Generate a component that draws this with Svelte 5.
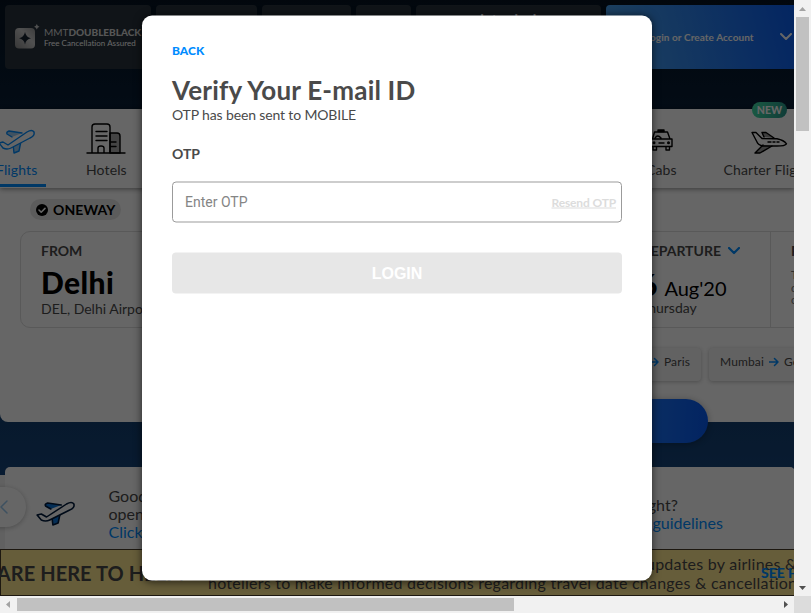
<script>
  let otp = $state('');
</script>

{#snippet plane()}
  <path d="M15 9 10 6q-1-2 2-3l13 2M24 13l-2 10-5 2-1-9" class="wing" />
  <path d="M2 15 6 14l5 3L30 4q5-3 7 0 1 4-4 6L14 20q-4 2-8 0Z" class="hull" />
{/snippet}

{#snippet arrow()}
  <svg class="arrow" width="10" height="10" viewBox="0 0 10 10"><path d="M0 5h9M5.5 1.5 9 5 5.500 8.500" /></svg>
{/snippet}

<div class="window">
  <div class="upper">
    <div class="page">
      <header>
        <div class="tile brand">
          <svg width="26" height="26" viewBox="0 0 26 26">
            <defs><linearGradient id="silver" x1="0" y1="1" x2="1" y2="0"><stop stop-color="#8b8b8b" /><stop offset=".6" stop-color="#c9c9c9" /><stop offset="1" stop-color="#999" /></linearGradient></defs>
            <rect x="0" y="4" width="20" height="20.500" rx="4" fill="url(#silver)" />
            <path d="M10 8q1 5.300 6 6.300-5 1-6 6.200-1-5.200-6-6.200 5-1 6-6.300Z" fill="#172331" />
            <path d="M21.800 0q.5 2.300 2.700 2.800-2.200.5-2.700 2.700-.5-2.200-2.700-2.700 2.200-.5 2.700-2.800Z" fill="#c9c9c9" />
          </svg>
          <div class="words"><p>MMT<b>DOUBLEBLACK</b></p><small>Free Cancellation Assured</small></div>
        </div>
        <div class="tile w101"></div>
        <div class="tile w89"></div>
        <div class="tile w55"></div>
        <div class="tile biz">Introducing</div>
        <div class="account">
          <span>Login or Create Account</span>
          <svg width="12" height="8" viewBox="0 0 12 8"><path d="m1 1 5 5 5-5" /></svg>
        </div>
      </header>

      <nav>
        <div class="tab flights">
          <svg width="40" height="26" viewBox="0 0 40 26">{@render plane()}</svg>
          <span>Flights</span><i></i>
        </div>
        <div class="tab hotels">
          <svg width="40" height="34" viewBox="0 0 40 34">
            <path d="M24 12h7q3 0 3 3v17H24Z" fill="#aaa" />
            <path d="M1 32h38M6 32V6q0-3 3-3h12q3 0 3 3v26M12 32v-5q0-2 3-2t3 2v5M10 10.500h11M10 15h11M10 19.500h11M25 21h5M25 25.500h5" />
          </svg>
          <span>Hotels</span>
        </div>
        <div class="tab cabs">
          <svg width="25" height="22" viewBox="0 0 25 22">
            <path d="M9 1h6v1.500H9Z" fill="#000" />
            <path d="m3.500 10 2-7h13l2.500 7M1.500 10h21.500v7.500H1.500ZM4 18v3h3.500v-3M17 18v3h3.500v-3M10 14h5M6 9q2.500-4 6 0" /><circle cx="5" cy="13.700" r=".8" /><circle cx="19.500" cy="13.700" r=".8" />
          </svg>
          <span>Cabs</span>
        </div>
        <div class="tab charter">
          <em>NEW</em>
          <svg width="37" height="24" viewBox="0 0 37 24">
            <path d="m13 6-2-4.500h4L23 7M12 14l-8 8h5l12-7" fill="#999" />
            <path d="M1 1.500h4l6 6 15 .3q7 1.500 9.500 5Q34 15 26 15H12q-5-1-6-4Z" /><path d="M17 11h3M22 11h2M26 11h2" />
          </svg>
          <span>Charter Flights</span>
        </div>
      </nav>

      <main>
        <div class="way">
          <svg width="12" height="12" viewBox="0 0 12 12"><circle cx="6" cy="6" r="6" /><path d="m3 6 2.200 2.200L9 4.400" /></svg>
          <b>ONEWAY</b>
        </div>
        <div class="search">
          <div class="from"><h4>FROM</h4><h2>Delhi</h2><p>DEL, Delhi Airport India</p></div>
          <div class="depart">
            <h4>DEPARTURE <svg width="12" height="8" viewBox="0 0 12 8"><path d="m1 1 5 5 5-5" /></svg></h4>
            <div class="date"><b>6</b> Aug'20</div>
            <p>Thursday</p>
          </div>
          <div class="return"><h4>RETURN</h4><p>Tap to add a return date</p><p>discounts</p><p>on return</p></div>
        </div>
        <div class="routes">
          <div class="route first">Delhi {@render arrow()} Paris</div>
          <div class="route">Mumbai {@render arrow()} Goa</div>
        </div>
        <div class="go"></div>
      </main>

      <section class="offer">
        <svg width="41" height="26" viewBox="0 0 39 26" preserveAspectRatio="none">{@render plane()}</svg>
        <div class="left"><p>Good news,</p><p>open again</p><p class="link">Click here</p></div>
        <div class="right"><p>flight?</p><p class="link">guidelines</p></div>
        <div class="prev"><svg width="8" height="14" viewBox="0 0 8 14"><path d="M7 1 1 7l6 6" /></svg></div>
      </section>

      <aside>
        <strong>WE ARE HERE TO HELP!</strong>
        <div class="notice"><p class="top">updates by airlines &amp;</p><p>hoteliers to make informed decisions regarding travel date changes &amp; cancellations</p></div>
        <b class="see">SEE HOW</b>
      </aside>

      <div class="shade">
        <form class="modal">
          <div class="back">BACK</div>
          <h1>Verify Your E-mail ID</h1>
          <p class="sent">OTP has been sent to MOBILE</p>
          <label for="otp">OTP</label>
          <div class="field"><input id="otp" placeholder="Enter OTP" bind:value={otp} /><span>Resend OTP</span></div>
          <button type="button">LOGIN</button>
        </form>
      </div>
    </div>
    <div class="vbar">
      <svg width="17" height="17"><path d="m5 11 3.500-4 3.500 4Z" fill="#a3a3a3" /></svg>
      <i></i>
      <svg class="end" width="17" height="17"><path d="m5 7 3.500 4L12 7Z" fill="#505050" /></svg>
    </div>
  </div>
  <div class="hbar">
    <svg width="17" height="17"><path d="m10 5-4 3.500 4 3.500Z" fill="#a3a3a3" /></svg>
    <i></i>
    <svg class="end" width="17" height="17"><path d="m7 5 4 3.500L7 12Z" fill="#505050" /></svg>
    <div class="corner"></div>
  </div>
</div>

<style>
  :global(body) { overflow: hidden; }
  .window, .window :global(*) { box-sizing: border-box; }
  .window { width: 811px; height: 613px; font-family: Lato, sans-serif; color: #4a4a4a; overflow: hidden; }
  h1, h2, h4, p { margin: 0; font-weight: 400; }
  svg { fill: none; flex: none; display: block; stroke-linecap: round; stroke-linejoin: round; }
  .upper { display: flex; height: 596px; }
  .page { position: relative; width: 794px; height: 596px; overflow: hidden; white-space: nowrap; background: linear-gradient(#051322, #15457b) 0 0 / 100% 475px no-repeat #f2f2f2; }

  header { height: 109px; padding-top: 5px; padding-left: 5px; display: flex; gap: 5px; }
  .tile { height: 64px; border-radius: 4px; background: #29333d; flex: none; }
  .brand { width: 146px; display: flex; padding: 19px 0 0 10px; gap: 3px; color: #d8d8d8; }
  .words { padding-top: 2px; }
  .words p { font-size: 10px; line-height: 12px; letter-spacing: -.02px; }
  .words b { font-weight: 900; }
  .words small { display: block; font-size: 8px; line-height: 10px; letter-spacing: .04px; color: #fff; }
  .w101 { width: 101px; }
  .w89 { width: 89px; }
  .w55 { width: 55px; }
  .biz { width: 185px; padding: 5px 0 0 64px; font-size: 14px; line-height: 17px; color: #fff; font-weight: 700; }
  .account { width: 200px; flex: none; height: 64px; border-radius: 4px 0 0 4px; background: linear-gradient(75deg, #4da6f0, #065af3); display: flex; align-items: center; padding-left: 39px; gap: 26px; color: #fff; font-size: 10px; font-weight: 700; letter-spacing: .08px; }
  .account svg { stroke: #fff; stroke-width: 2; }
  .account span { width: 109px; }

  nav { position: relative; z-index: 1; height: 79px; background: #fff; box-shadow: 0 1px 5px rgba(0, 0, 0, .45); display: flex; font-size: 14px; }
  .tab { display: flex; flex-direction: column; flex: none; position: relative; letter-spacing: .12px; }
  .tab span { line-height: 18px; margin-top: auto; margin-bottom: 9px; }
  .tab svg { stroke: #000; stroke-width: 1.4; }
  .flights { width: 86px; margin-left: -4px; color: #008cff; }
  .flights svg { stroke: #008cff; margin: 19px 0 0 1px; }
  .wing { fill: #a0cdf3; }
  .hull { fill: #fff; }
  .flights i { position: absolute; left: 0; bottom: 1px; width: 50px; height: 3px; background: #008cff; }
  .hotels { width: 564px; padding-left: 4px; }
  .hotels svg { margin: 12px 0 0; }
  .cabs { width: 77.500px; }
  .cabs svg { margin: 20px 0 0 3px; }
  .charter svg { margin: 22px 0 0 27px; }
  .charter em { position: absolute; left: 28.500px; top: -7px; width: 35px; height: 16px; border-radius: 8px; background: linear-gradient(100deg, #43e1a8, #28958a); color: #fff; font: 900 10.500px/16px Lato, sans-serif; text-align: center; }

  main { position: relative; height: 234px; background: #fff; border-radius: 0 0 0 8px; padding: 11px 0 0 20px; }
  .way { margin-left: 10px; width: 91px; height: 21px; border-radius: 11px; background: #e7e7e7; display: flex; align-items: center; padding-left: 6px; gap: 5px; color: #000; font-size: 14px; letter-spacing: .1px; }
  .way circle { fill: #000; }
  .way path { stroke: #fff; stroke-width: 1.600; }
  .search { margin-top: 11px; width: 900px; height: 97px; border: 1px solid #dedede; border-radius: 10px; display: flex; }
  .search h4 { font-size: 14px; line-height: 18px; font-weight: 700; padding-top: 10px; display: flex; gap: 7px; align-items: center; }
  .search p { font-size: 14px; line-height: 17px; }
  .from { width: 601px; padding-left: 20px; }
  .from h2 { font-size: 30px; line-height: 37px; font-weight: 900; color: #000; margin: 4px 0 -1px; letter-spacing: .4px; }
  .depart { width: 148px; padding-left: 18px; }
  .depart svg { stroke: #008cff; stroke-width: 2.200; }
  .date { display: flex; align-items: baseline; gap: 7px; font-size: 20px; line-height: 37px; margin: 6px 0 -8px; color: #000; }
  .date b { font-size: 30px; font-weight: 900; }
  .return { border-left: 1px solid #dedede; padding-left: 20px; }
  .return h4 { margin-bottom: 9px; }
  .return p { font-size: 11px; line-height: 12.500px; color: #777; }
  .routes { display: flex; gap: 8px; margin: 20px 0 0 540px; }
  .route { height: 33px; flex: none; width: 141px; border-radius: 4px; background: #f5f5f5; box-shadow: 0 1px 4px rgba(0, 0, 0, .25); display: flex; align-items: flex-start; gap: 5px; padding-left: 11px; font-size: 12px; line-height: 28px; letter-spacing: .12px; }
  .first { justify-content: flex-end; padding-right: 11px; }
  .arrow { stroke: #008cff; stroke-width: 1.500; margin-top: 9px; }
  .go { position: absolute; left: 492px; top: 211px; width: 216px; height: 44px; border-radius: 22px; background: linear-gradient(93deg, #53b2fe, #065af3); box-shadow: 0 1px 7px rgba(0, 0, 0, .3); }

  .offer { position: relative; margin: 45px 0 0 5px; width: 790px; height: 140px; background: #fff; border-radius: 5px; display: flex; padding: 20px 0 0 30px; font-size: 16px; line-height: 18px; }
  .offer > svg { margin-top: 13px; stroke: #001b3c; stroke-width: 1.500; }
  .offer .wing { fill: #0b74d7; }
  .left { margin-left: 32.500px; width: 536px; }
  .right { padding-top: 9px; width: 100px; margin-left: -12px; }
  .right p:first-child { margin-left: 2px; }
  .link { color: #008cff; }
  .right .link { margin-left: 20px; }
  .prev { position: absolute; left: -31px; top: 20px; width: 52px; height: 40px; border-radius: 20px; background: #fff; box-shadow: 0 1px 5px rgba(0, 0, 0, .25); padding: 13px 0 0 26px; }
  .prev svg { stroke: #9bcaf1; stroke-width: 1.500; }

  aside { position: absolute; left: 0; top: 549px; width: 900px; height: 47px; background: #ffe991; border: 1px solid #4a3e29; color: #4a4a4a; }
  aside strong { position: absolute; left: -41px; top: 11px; font-size: 20px; line-height: 24px; font-weight: 700; letter-spacing: .05px; }
  .notice { position: absolute; left: 207px; top: 4px; font-size: 16px; line-height: 19px; letter-spacing: .24px; }
  .notice .top { padding-left: 438px; }
  .see { position: absolute; left: 760px; top: 14px; font-size: 14px; line-height: 17px; font-weight: 900; color: #008cff; }

  .shade { position: absolute; z-index: 5; inset: 0; background: rgba(0, 0, 0, .6); padding: 15px 0 0 142px; }
  .modal { width: 510px; height: 565px; border-radius: 10px; background: #fff; box-shadow: 0 1px 8px rgba(0, 0, 0, .65); padding: 27px 30px; transform: translateY(.5px); }
  .back { font-size: 12px; line-height: 15px; font-weight: 900; color: #008cff; }
  h1 { margin-top: 17px; font-size: 26px; line-height: 31px; font-weight: 700; letter-spacing: .2px; }
  .sent { font-size: 14px; line-height: 17px; letter-spacing: -.14px; }
  label { display: block; font-size: 14px; line-height: 17px; font-weight: 700; margin-top: 22px; }
  .field { margin-top: 20px; height: 41px; border: 1px solid #9b9b9b; border-radius: 4px; display: flex; align-items: center; padding: 0 5px 0 12px; }
  input { flex: 1; min-width: 0; border: 0; outline: 0; padding: 0 0 2px; font: 14px Roboto, sans-serif; background: none; }
  input::placeholder { color: #858585; opacity: 1; }
  .field span { font-size: 12px; font-weight: 700; letter-spacing: -.14px; color: #dcdcdc; text-decoration: underline; }
  button { display: block; width: 450px; height: 41px; margin-top: 30px; border: 0; border-radius: 4px; background: #e7e7e7; color: #fff; font: 700 16px "Liberation Sans", sans-serif; padding: 0; }

  .vbar { width: 17px; background: #f1f1f1; display: flex; flex-direction: column; }
  .vbar i { height: 114px; width: 13px; margin-left: 2px; background: #c1c1c1; }
  .vbar .end { margin-top: auto; }
  .hbar { height: 17px; background: #f1f1f1; display: flex; }
  .hbar i { width: 497px; height: 13px; margin-top: 2px; background: #c1c1c1; }
  .hbar .end { margin-left: auto; }
  .corner { width: 17px; background: #dcdcdc; }
</style>
